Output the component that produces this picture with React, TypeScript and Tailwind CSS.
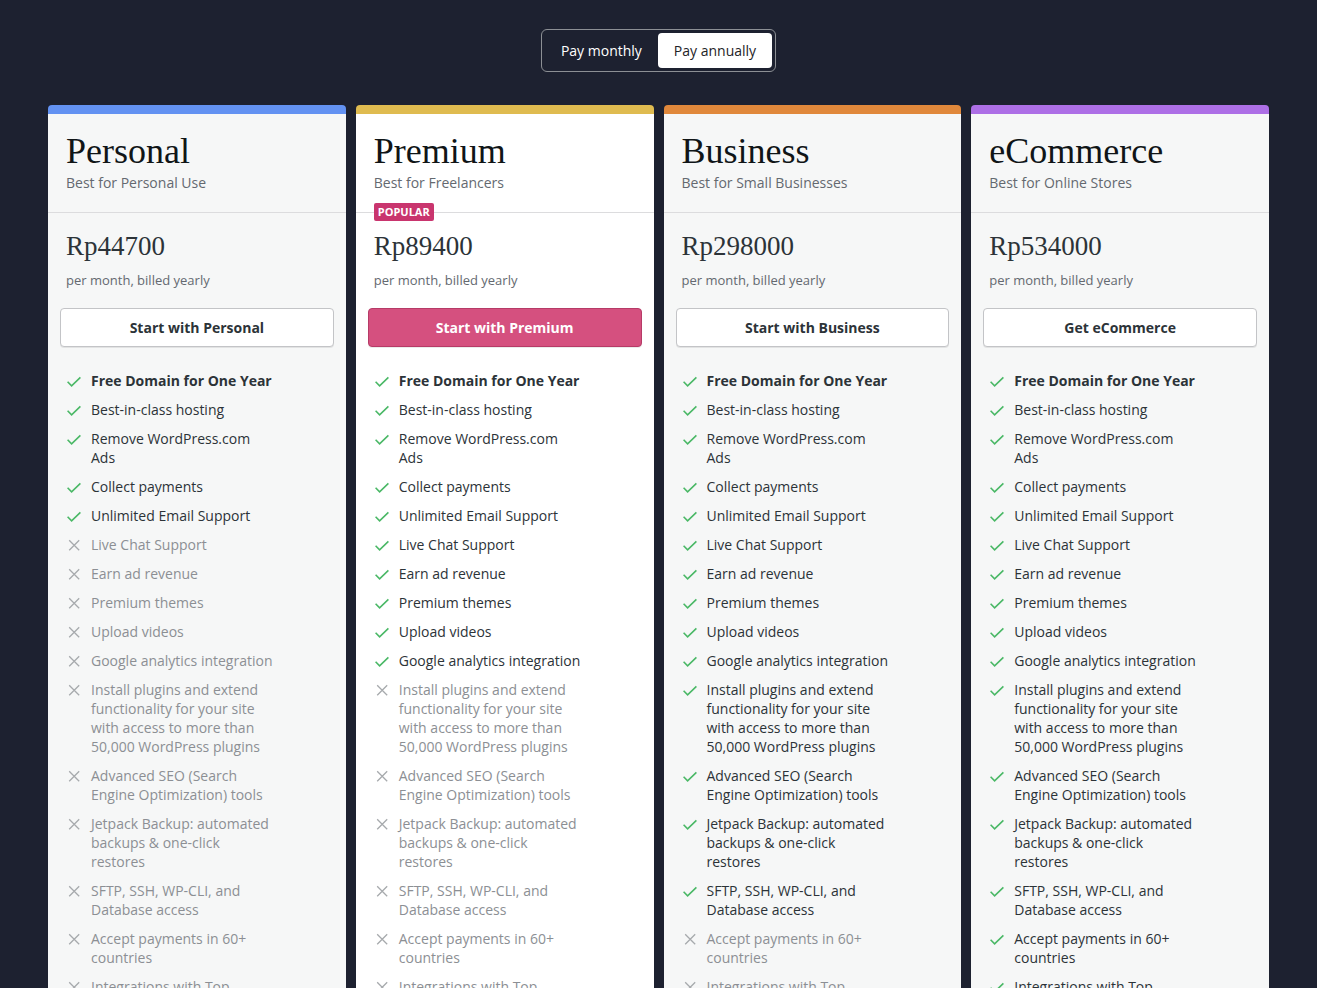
import React from 'react'

type Plan = {
  name: string
  tagline: string
  price: string
  cta: string
  bar: string
  popular?: boolean
  enabled: number
}

const PLANS: Plan[] = [
  { name: 'Personal', tagline: 'Best for Personal Use', price: 'Rp44700', cta: 'Start with Personal', bar: 'bg-[#6392f2]', enabled: 5 },
  { name: 'Premium', tagline: 'Best for Freelancers', price: 'Rp89400', cta: 'Start with Premium', bar: 'bg-[#dfbb50]', popular: true, enabled: 10 },
  { name: 'Business', tagline: 'Best for Small Businesses', price: 'Rp298000', cta: 'Start with Business', bar: 'bg-[#e0883b]', enabled: 14 },
  { name: 'eCommerce', tagline: 'Best for Online Stores', price: 'Rp534000', cta: 'Get eCommerce', bar: 'bg-[#ad6fe6]', enabled: 16 },
]

const FEATURES = [
  'Free Domain for One Year',
  'Best-in-class hosting',
  'Remove WordPress.com Ads',
  'Collect payments',
  'Unlimited Email Support',
  'Live Chat Support',
  'Earn ad revenue',
  'Premium themes',
  'Upload videos',
  'Google analytics integration',
  'Install plugins and extend functionality for your site with access to more than 50,000 WordPress plugins',
  'Advanced SEO (Search Engine Optimization) tools',
  'Jetpack Backup: automated backups & one-click restores',
  'SFTP, SSH, WP-CLI, and Database access',
  'Accept payments in 60+ countries',
  'Integrations with Top Shipping Carriers',
  'Premium design options customized for online stores',
]

const serif = { fontFamily: '"Liberation Serif", "DejaVu Serif", serif' }

function Check() {
  return (
    <svg viewBox="0 0 16 16" className="w-4 h-4" fill="none" stroke="#4ab866" strokeWidth="1.6">
      <path d="M1.6 8.8 L5.6 12.8 L14.4 4.4" />
    </svg>
  )
}

function Cross() {
  return (
    <svg viewBox="0 0 16 16" className="w-4 h-4" fill="none" stroke="#a7aaad" strokeWidth="1.3">
      <path d="M3.2 3.2 L13.2 13.2 M13.2 3.2 L3.2 13.2" />
    </svg>
  )
}

function PlanCard({ plan }: { plan: Plan }) {
  const bg = plan.popular ? 'bg-white' : 'bg-[#f6f7f7]'
  return (
    <div className="flex flex-col">
      <div className={`h-[9px] rounded-t-[4px] ${plan.bar}`} />
      <div className={`${bg} flex-1 pb-10`}>
        {/* Header */}
        <div className="relative border-b border-[#dcdcde] px-[18px] pt-[17px] pb-[19px]">
          <h2 className="text-[36px] leading-[40px] text-[#101517]" style={serif}>
            {plan.name}
          </h2>
          <p className="mt-[2px] text-[14px] leading-[20px] text-[#646970]">{plan.tagline}</p>
          {plan.popular && (
            <span className="absolute left-[18px] bottom-0 translate-y-1/2 rounded-[2px] bg-[#c9356e] px-[4px] text-[11px] leading-[18px] font-bold text-white">
              POPULAR
            </span>
          )}
        </div>

        {/* Price */}
        <div className="px-[18px] pt-[17px]">
          <div className="text-[27px] leading-[32px] text-[#2c3338]" style={serif}>
            {plan.price}
          </div>
          <div className="mt-[9px] text-[13px] leading-[18px] text-[#646970]">per month, billed yearly</div>
        </div>

        <div className="px-3 mt-[19px]">
          <button
            className={`w-full h-[39px] rounded-[4px] border text-[14px] font-bold shadow-[0_1px_0_rgba(0,0,0,0.08)] ${
              plan.popular
                ? 'bg-[#d5507f] border-[#b63b67] text-white'
                : 'bg-white border-[#c3c4c7] text-[#2c3338]'
            }`}
          >
            {plan.cta}
          </button>
        </div>

        {/* Features */}
        <ul className="mt-[24px] px-[18px] flex flex-col gap-[10px]">
          {FEATURES.map((f, i) => {
            const ok = i < plan.enabled
            return (
              <li key={f} className="flex items-start gap-[9px]">
                <span className="mt-[1.5px] shrink-0">{ok ? <Check /> : <Cross />}</span>
                <span
                  className={`max-w-[186px] text-[14px] leading-[19px] ${
                    ok ? 'text-[#2c3338]' : 'text-[#8c8f94]'
                  } ${i === 0 ? 'font-bold' : ''}`}
                >
                  {f}
                </span>
              </li>
            )
          })}
        </ul>
      </div>
    </div>
  )
}

export default function App() {
  return (
    <div
      className="min-h-screen bg-[#1d2130] pt-[29px] pb-16"
      style={{ fontFamily: '"Open Sans", "Noto Sans", sans-serif' }}
    >
      {/* Billing toggle */}
      <div className="flex justify-center">
        <div className="flex rounded-[6px] border border-[#8c8f94] p-[3px]">
          <button className="h-[35px] px-4 rounded-[4px] text-[14px] text-white">Pay monthly</button>
          <button className="h-[35px] px-4 rounded-[4px] bg-white text-[14px] text-[#1d2327]">Pay annually</button>
        </div>
      </div>

      <div className="mt-[33px] px-12 grid grid-cols-4 gap-[10px]">
        {PLANS.map((p) => (
          <PlanCard key={p.name} plan={p} />
        ))}
      </div>
    </div>
  )
}
